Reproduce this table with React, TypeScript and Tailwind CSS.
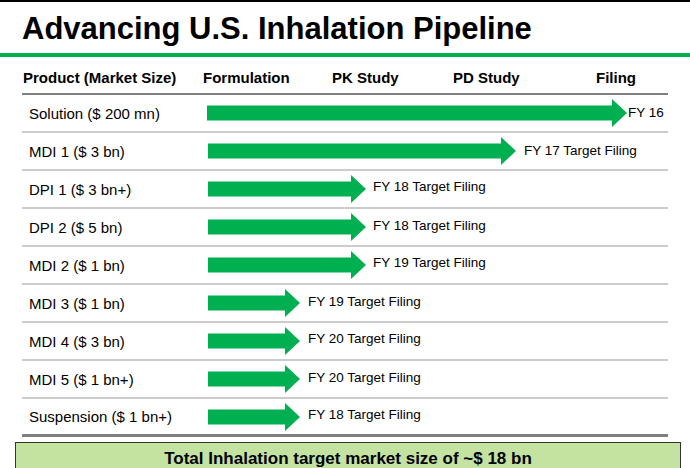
const rows = [
  { label: "Solution ($ 200 mn)", len: 420, note: "FY 16", gap: 1, lift: 0 },
  { label: "MDI 1 ($ 3 bn)", len: 308, note: "FY 17 Target Filing", gap: 8, lift: 0 },
  { label: "DPI 1 ($ 3 bn+)", len: 158, note: "FY 18 Target Filing", gap: 7, lift: 4 },
  { label: "DPI 2 ($ 5 bn)", len: 158, note: "FY 18 Target Filing", gap: 7, lift: 3 },
  { label: "MDI 2 ($ 1 bn)", len: 158, note: "FY 19 Target Filing", gap: 7, lift: 4 },
  { label: "MDI 3 ($ 1 bn)", len: 92, note: "FY 19 Target Filing", gap: 8, lift: 3 },
  { label: "MDI 4 ($ 3 bn)", len: 92, note: "FY 20 Target Filing", gap: 8, lift: 4 },
  { label: "MDI 5 ($ 1 bn+)", len: 92, note: "FY 20 Target Filing", gap: 8, lift: 3 },
  { label: "Suspension ($ 1 bn+)", len: 92, note: "FY 18 Target Filing", gap: 8, lift: 3 },
];

function Arrow({ len }: { len: number }) {
  const head = 15;
  return (
    <svg width={len} height={28} viewBox={`0 0 ${len} 28`} className="block shrink-0">
      <rect x={0} y={6.5} width={len - head + 1} height={15} fill="#00b050" />
      <polygon points={`${len - head},0 ${len},14 ${len - head},28`} fill="#00b050" />
    </svg>
  );
}

export default function App() {
  return (
    <div className="w-[690px] h-[468px] overflow-hidden bg-white text-black font-['Liberation_Sans',Arial,sans-serif]">
      <div className="h-[2px] bg-black" />
      <div className="h-[51px] pl-[22px] pt-[11px] text-[31px] font-bold leading-none">
        Advancing U.S. Inhalation Pipeline
      </div>
      <div className="h-[4px] bg-[#00b050]" />

      <div className="mx-[22px] h-[38px] border-b-2 border-[#7f7f7f] flex pt-[13px] text-[15px] font-bold leading-none">
        <span className="w-[181px] pl-[1px]">Product (Market Size)</span>
        <span className="w-[129px]">Formulation</span>
        <span className="w-[121px]">PK Study</span>
        <span className="w-[143px]">PD Study</span>
        <span>Filing</span>
      </div>

      {rows.map((r, i) => (
        <div
          key={i}
          className={
            i === rows.length - 1
              ? "mx-[22px] h-[38px] flex items-center border-b-[3px] border-[#7f7f7f]"
              : "mx-[22px] h-[38px] flex items-center border-b-2 border-[#cccccc]"
          }
        >
          <span className="w-[185px] pl-[7px] text-[15px] leading-none">{r.label}</span>
          <div className={i === 0 ? "flex items-center" : "flex items-center ml-[1px]"}>
            <Arrow len={r.len} />
            <span
              className="text-[13.5px] leading-none whitespace-nowrap"
              style={{ marginLeft: r.gap, marginBottom: r.lift }}
            >
              {r.note}
            </span>
          </div>
        </div>
      ))}

      <div className="mt-[5px] ml-[15px] w-[666px] h-[40px] border border-[#333333] bg-[#c4e3a0] flex justify-center pt-[7px] text-[17px] font-bold leading-none">
        Total Inhalation target market size of ~$ 18 bn
      </div>
    </div>
  );
}
